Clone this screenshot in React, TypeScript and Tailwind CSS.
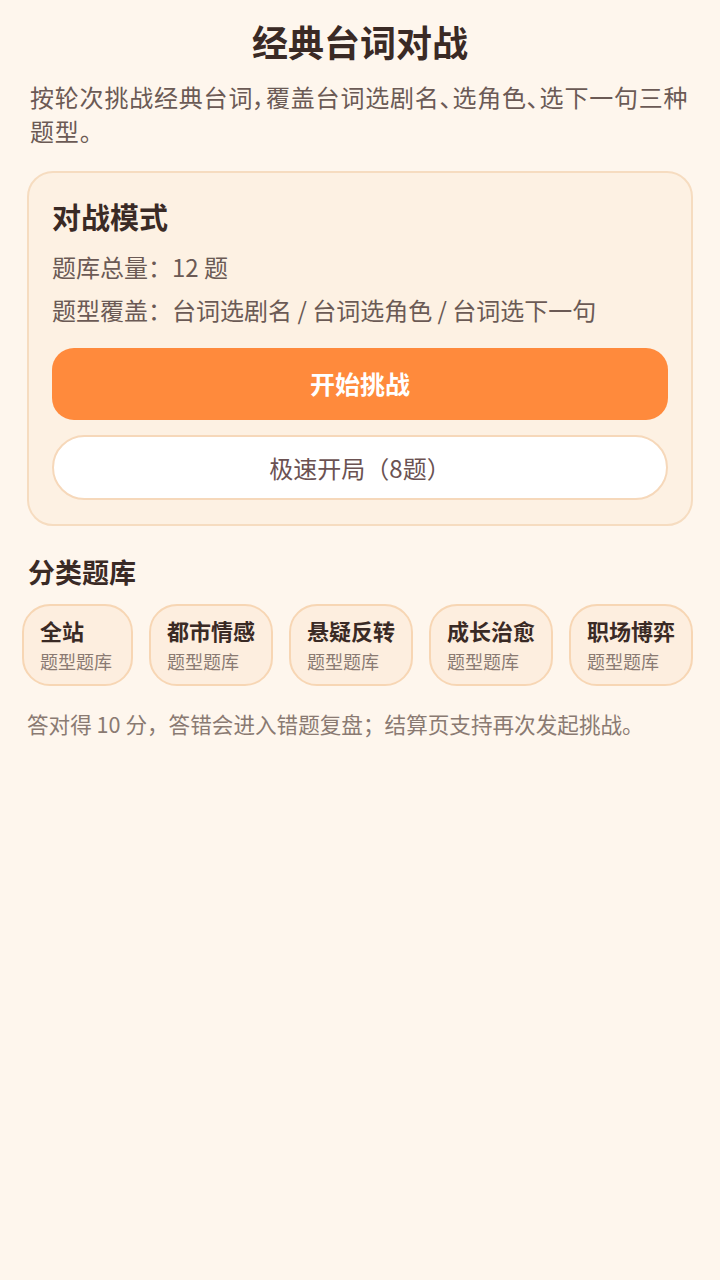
import React from "react";

const chips = ["全站", "都市情感", "悬疑反转", "成长治愈", "职场博弈"];

export default function App() {
  return (
    <div
      className="min-h-[1280px] w-[720px] bg-[#fef6ed] pt-4 text-[#3b2b26]"
      style={{ fontFamily: '"Noto Sans CJK SC", "Noto Sans", sans-serif' }}
    >
      <h1 className="text-center text-[36px] font-bold leading-[50px] text-[#3a2a25]">经典台词对战</h1>
      <p className="ml-[30px] mr-[22px] mt-[14px] text-[24px] leading-[34px] tracking-[0.8px] text-[#6b5a55] [font-feature-settings:'palt']">
        按轮次挑战经典台词，覆盖台词选剧名、选角色、选下一句三种题型。
      </p>

      <div className="mx-[27px] mt-[23px] rounded-[26px] border-2 border-[#f6dcc0] bg-[#fdf1e3] px-[23px] pt-[23px] pb-[24px]">
        <h2 className="text-[29px] font-bold leading-[40px] text-[#3a2a25]">对战模式</h2>
        <p className="mt-[13px] text-[24px] leading-[36px] text-[#6b5a55]">题库总量：12 题</p>
        <p className="mt-[7px] text-[24px] leading-[36px] text-[#6b5a55]">
          题型覆盖：台词选剧名 / 台词选角色 / 台词选下一句
        </p>
        <button className="mt-[20px] flex h-[72px] w-full items-center justify-center rounded-[22px] bg-[#ff8a3c] text-[25px] font-bold text-white">
          开始挑战
        </button>
        <button className="mt-[15px] flex h-[65px] w-full items-center justify-center rounded-full border-2 border-[#f6d8ba] bg-white text-[24px] text-[#6b5252]">
          极速开局（8题）
        </button>
      </div>

      <h3 className="mx-[28px] mt-[28px] text-[27px] font-bold leading-[36px] text-[#3a2a25]">分类题库</h3>
      <div className="ml-[22px] mt-[14px] flex gap-4">
        {chips.map((c) => (
          <div
            key={c}
            className="flex min-w-[111px] flex-col rounded-[28px] border-2 border-[#f7d6b4] bg-[#fdeedf] px-4 pt-[10px] pb-[11px]"
          >
            <span className="text-[22px] font-bold leading-[28px] text-[#3a2a25]">{c}</span>
            <span className="mt-[5px] whitespace-nowrap text-[18px] leading-[24px] text-[#8a7a72]">题型题库</span>
          </div>
        ))}
      </div>

      <p className="mx-[27px] mt-[23px] text-[21.6px] leading-[30px] text-[#8a7a72]">
        答对得 10 分，答错会进入错题复盘；结算页支持再次发起挑战。
      </p>
    </div>
  );
}
